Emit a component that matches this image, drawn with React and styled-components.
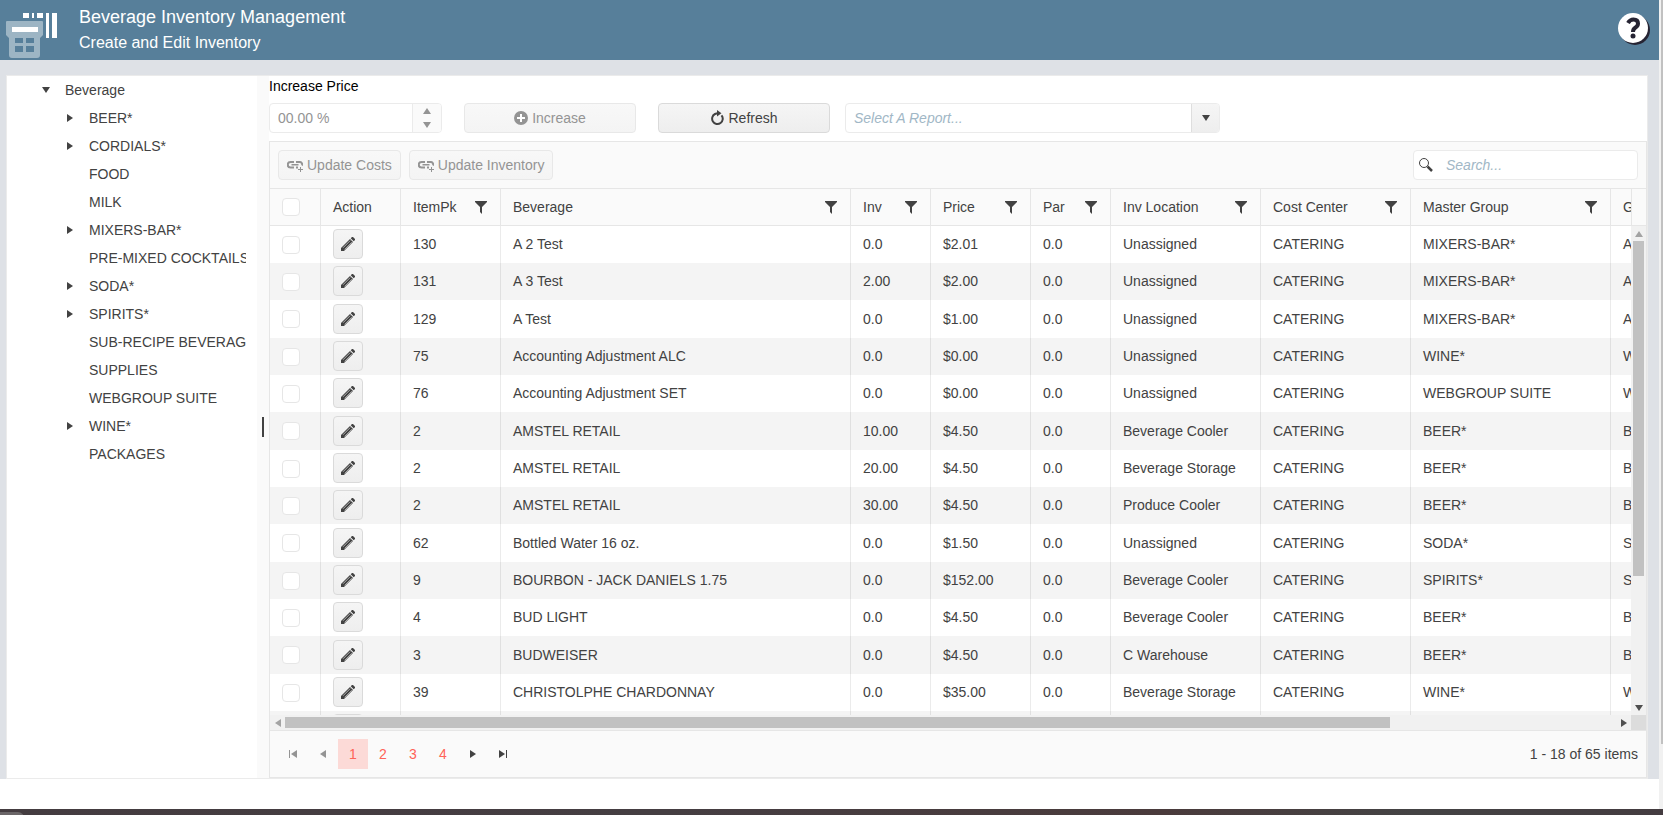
import React from 'react';
import styled, { createGlobalStyle, css } from 'styled-components';

const GlobalStyle = createGlobalStyle`
  *, *::before, *::after { box-sizing: border-box; }
  body {
    margin: 0;
    background: #fff;
    color: #424242;
    font: 14px/20px 'Liberation Sans', Arial, sans-serif;
  }
  button, input, select { font: inherit; color: inherit; margin: 0; }
`;

const Screen = styled.div`
  height: 100vh;
  min-height: 480px;
  display: flex;
  flex-direction: column;
  overflow: hidden;
`;

const Viewport = styled.div`
  flex: 1;
  min-height: 0;
  display: flex;
`;

const Page = styled.div`
  flex: 1;
  min-width: 0;
  display: flex;
  flex-direction: column;
  padding-bottom: 30px;
`;

const PageScroll = styled.div`
  width: 4px;
  background: #f1f1f1;
  padding-left: 2px;

  &::before {
    content: '';
    display: block;
    height: 746px;
    max-height: 92%;
    background: #c1c1c1;
  }
`;

const Desktop = styled.div`
  height: 6px;
  overflow: hidden;
  padding-top: 3px;
  background: linear-gradient(90deg, #443c40, #453e42 40%, #4a3b3c 70%, #444344 85%, #443c40);

  &::before {
    content: '';
    display: block;
    width: 24px;
    height: 6px;
    border-top-right-radius: 6px;
    background: #6b6668;
  }
`;

const Header = styled.header`
  flex: none;
  height: 60px;
  display: flex;
  align-items: center;
  padding: 0 9px 0 5px;
  background: #577f9a;
  color: #fff;
`;

const Titles = styled.div`
  flex: 1;
  padding: 4px 0 0 18px;
  height: 60px;

  h1, h2 {
    margin: 0;
    font-weight: 400;
    line-height: 26px;
  }
  h1 { font-size: 18px; }
  h2 { font-size: 16px; }
`;

const HelpButton = styled.button`
  display: flex;
  padding: 0;
  border: 0;
  background: none;
  cursor: pointer;
`;

const Workspace = styled.main`
  flex: 1;
  min-height: 0;
  display: flex;
  padding: 15px 11px 0 6px;
  background: #dee1e6;
`;

const Splitter = styled.div`
  flex: 1;
  min-width: 0;
  display: flex;
  border: 1px solid #ebebeb;
  background: #fff;
`;

const TreePane = styled.nav`
  flex: none;
  width: 250px;
  padding-right: 11px;
`;

const TreeList = styled.ul`
  list-style: none;
  margin: 0;
  padding: 0 0 0 24px;
  overflow: hidden;
`;

const TreeRow = styled.div`
  display: flex;
  align-items: center;
  height: 28px;
  padding-left: 8px;
  white-space: nowrap;
`;

const TreeToggle = styled.span`
  flex: none;
  width: 26px;
  padding: 0 15px 0 3px;
  display: flex;
  justify-content: center;
`;

const SplitBar = styled.div`
  flex: none;
  width: 12px;
  display: flex;
  align-items: center;
  justify-content: center;
  background: #fafafa;

  &::before {
    content: '';
    width: 2px;
    height: 20px;
    background: #424242;
  }
`;

const Content = styled.section`
  flex: 1;
  min-width: 0;
  display: flex;
  flex-direction: column;
`;

const PriceLabel = styled.label`
  color: #000;
  height: 27px;
`;

const Controls = styled.div`
  display: flex;
  gap: 15px;
  margin-bottom: 8px;
`;

const PriceGroup = styled.div`
  display: flex;
  gap: 22px;
`;

const Button = styled.button`
  display: inline-flex;
  align-items: center;
  justify-content: center;
  gap: 4px;
  height: 30px;
  width: ${(p) => (p.$wide ? '172px' : 'auto')};
  padding: 0 8px;
  border: 1px solid #dadada;
  border-radius: 4px;
  background: linear-gradient(#f5f5f5, #eeeeee);
  color: #424242;
  cursor: pointer;

  &:disabled {
    border-color: #e8e8e8;
    background: linear-gradient(#f8f8f8, #f4f4f4);
    color: #949494;
    cursor: default;
  }
`;

const Field = styled.div`
  display: flex;
  height: 30px;
  width: ${(p) => p.$width}px;
  border: 1px solid #ebebeb;
  border-radius: 4px;
  background: #fff;
  overflow: hidden;
`;

const fieldText = css`
  flex: 1;
  min-width: 0;
  border: 0;
  padding: 0 8px;
  outline: 0;
  background: transparent;
`;

const FieldInput = styled.input`
  ${fieldText}
  &:disabled { color: #949494; }
  &::placeholder { color: #a1b7c6; font-style: italic; opacity: 1; }
`;

const FieldSelect = styled.select`
  ${fieldText}
  appearance: none;
  color: #a1b7c6;
  font-style: italic;
`;

const Spinner = styled.div`
  width: 29px;
  display: flex;
  flex-direction: column;
  border-left: 1px solid #ebebeb;
  background: #fafafa;
`;

const SpinButton = styled.button`
  flex: 1;
  display: flex;
  align-items: center;
  justify-content: center;
  padding: 0;
  border: 0;
  background: none;
  color: #949494;
`;

const SelectArrow = styled.span`
  flex: none;
  width: 28px;
  display: flex;
  align-items: center;
  justify-content: center;
  border-left: 1px solid #dedede;
  background: linear-gradient(#f5f5f5, #eeeeee);
`;

const Grid = styled.div`
  flex: 1;
  min-height: 0;
  display: flex;
  flex-direction: column;
  border: 1px solid #e6e6e6;
  background: #fafafa;
`;

const GridToolbar = styled.div`
  flex: none;
  display: flex;
  gap: 8px;
  padding: 8px;
  border-bottom: 1px solid #e6e6e6;
`;

const SearchField = styled(Field)`
  margin-left: auto;
  align-items: center;
  padding-left: 4px;

  input { padding-left: 12px; }
`;

const HeadArea = styled.div`
  flex: none;
  padding-right: 15px;
  border-bottom: 1px solid #e6e6e6;
`;

const HeadClip = styled.div`
  overflow: hidden;
  border-right: 1px solid #e6e6e6;
  margin-right: -1px;
`;

const Body = styled.div`
  flex: 1;
  min-height: 0;
  display: grid;
  grid-template-columns: minmax(0, 1fr) 15px;
  grid-template-rows: minmax(0, 1fr) 15px;
`;

const BodyClip = styled.div`
  overflow: hidden;
  background: #fff;
`;

const Table = styled.table`
  table-layout: fixed;
  width: 1640px;
  border-collapse: separate;
  border-spacing: 0;

  th, td {
    padding: 0 13px 0 12px;
    text-align: left;
    font-weight: 400;
    white-space: nowrap;
    overflow: hidden;
    border-left: 1px solid rgba(0, 0, 0, 0.08);
  }
  td { padding-bottom: 1px; }
  th:first-child, td:first-child {
    border-left: 0;
    padding-bottom: 0;
  }
  th { height: 36px; }
`;

const Row = styled.tr`
  height: 37px;
  &:nth-child(even) { background: #f4f4f4; }
  &:nth-child(3n) { height: 38px; }
`;

const HeadCell = styled.div`
  display: flex;
  align-items: center;
  justify-content: space-between;
`;

const FilterButton = styled.button`
  display: flex;
  padding: 0;
  border: 0;
  background: none;
`;

const Checkbox = styled.input`
  appearance: none;
  display: block;
  width: 18px;
  height: 18px;
  border: 1px solid #e6e6e6;
  border-radius: 4px;
  background: #fff;
`;

const EditButton = styled(Button)`
  display: flex;
  width: 30px;
  padding: 0;
`;

const ScrollTrack = styled.div`
  display: flex;
  flex-direction: ${(p) => (p.$vertical ? 'column' : 'row')};
  align-items: center;
  background: #f1f1f1;
`;

const ScrollArrow = styled.span`
  flex: none;
  width: 15px;
  height: 15px;
  display: flex;
  align-items: center;
  justify-content: center;
  color: ${(p) => (p.$off ? '#a3a3a3' : '#505050')};
`;

const ScrollRail = styled.div`
  flex: 1;
  min-height: 0;
  min-width: 0;

  &::before {
    content: '';
    display: block;
    background: #c1c1c1;
    width: ${(p) => (p.$vertical ? '11px' : '83%')};
    height: ${(p) => (p.$vertical ? '73%' : '11px')};
  }
`;

const ScrollCorner = styled.div`
  background: #dcdcdc;
`;

const Pager = styled.nav`
  flex: none;
  display: flex;
  align-items: center;
  padding: 8px;
  border-top: 1px solid #e6e6e6;
`;

const PageButton = styled.button`
  width: 30px;
  height: 30px;
  display: flex;
  align-items: center;
  justify-content: center;
  padding: 0;
  border: 0;
  background: ${(p) => (p.$current ? '#fcdad7' : 'none')};
  color: ${(p) => (p.$number ? '#ff6358' : '#424242')};

  &:disabled { color: #949494; }
`;

const PagerInfo = styled.span`
  margin-left: auto;
`;

const arrowPaths = {
  right: 'M0 0L6 4L0 8Z',
  left: 'M6 0L0 4L6 8Z',
  down: 'M0 0H8L4 6Z',
  up: 'M0 6H8L4 0Z',
};

const Arrow = ({ dir, size = 8 }) => {
  const flat = dir === 'up' || dir === 'down';
  const small = (size * 3) / 4;
  return (
    <svg
      width={flat ? size : small}
      height={flat ? small : size}
      viewBox={flat ? '0 0 8 6' : '0 0 6 8'}
      fill="currentColor"
      aria-hidden="true"
    >
      <path d={arrowPaths[dir]} />
    </svg>
  );
};

const LogoIcon = () => (
  <svg width="56" height="60" viewBox="0 0 56 60" aria-hidden="true">
    <path fill="#fff" d="M18 13h6v5h-6zM27 13h2v5h-2zM32 13h6v5h-6zM41 13h3v25h-3zM47 13h5v25h-5z" />
    <path
      fill="#9db5c4"
      fillRule="evenodd"
      d="M2 21H37Q38 21 38 22V35L35 38V55Q35 58 32 58H7Q4 58 4 55V38L1 35V22Q1 21 2 21ZM10 38V43H18V38ZM21 38V43H29V38ZM10 46V52H18V46ZM21 46V52H29V46Z"
    />
    <path fill="#fff" d="M7 27h26v5H7z" />
  </svg>
);

const HelpIcon = () => (
  <svg width="34" height="34" viewBox="0 0 34 34" aria-hidden="true">
    <circle cx="19" cy="17" r="15" fill="#262433" />
    <circle cx="17" cy="15" r="15" fill="#fff" />
    <path
      d="M12 10Q14 6.500 17.500 6.500Q22 6.500 22 10.500Q22 13 19.500 14.500Q17 16 17 19"
      fill="none"
      stroke="#262433"
      strokeWidth="4"
    />
    <circle cx="17" cy="23" r="2.500" fill="#262433" />
  </svg>
);

const PlusIcon = () => (
  <svg width="14" height="14" viewBox="0 0 14 14" aria-hidden="true">
    <circle cx="7" cy="7" r="7" fill="currentColor" />
    <path d="M7 3V11M3 7H11" stroke="#fff" strokeWidth="2" />
  </svg>
);

const RefreshIcon = () => (
  <svg width="14" height="16" viewBox="0 0 14 16" aria-hidden="true">
    <path d="M11.500 5.300A5.300 5.300 0 1 1 5 4Q6.500 3.200 8 3.200" fill="none" stroke="currentColor" strokeWidth="2" />
    <path d="M7 0L11.500 3.200L7 6.400Z" fill="currentColor" />
  </svg>
);

const LinkPlusIcon = () => (
  <svg width="16" height="16" viewBox="0 0 16 16" aria-hidden="true">
    <g fill="none" stroke="currentColor">
      <path d="M7 5H3.500A2.500 2.500 0 0 0 3.500 10.500H7M9 5H12.500A2.500 2.500 0 0 1 15 8.500" strokeWidth="2" />
      <path d="M4.500 7.750H11.500" strokeWidth="1.500" />
      <path d="M9 10.500H11" strokeWidth="2" />
      <path d="M13.500 10V15M11 12.500H16" />
    </g>
  </svg>
);

const SearchIcon = () => (
  <svg width="16" height="16" viewBox="0 0 16 16" aria-hidden="true">
    <circle cx="6" cy="6" r="4.500" fill="none" stroke="#424242" />
    <path d="M9.500 9.500L14 14" stroke="#424242" strokeWidth="2.500" />
  </svg>
);

const FilterIcon = () => (
  <svg width="12" height="14" viewBox="0 0 12 14" aria-hidden="true">
    <path d="M0 1H12V2L7 7V14L5 12V7L0 2Z" fill="#424242" />
  </svg>
);

const PencilIcon = () => (
  <svg width="16" height="16" viewBox="0 0 16 16" aria-hidden="true">
    <path d="M1 15V12L10 3L13 6L4 15Z" fill="#424242" />
    <path d="M10.700 2.300L12 1H13L15 3V4L13.700 5.300Z" fill="#424242" />
    <path d="M3 11.800L10.200 4.600M4.600 13.400L11.800 6.200" stroke="#d4d4d4" strokeWidth=".7" />
  </svg>
);

const EndIcon = ({ first }) => (
  <svg width="8" height="8" viewBox="0 0 8 8" fill="currentColor" aria-hidden="true">
    <path d={first ? 'M0 0H1V8H0ZM8 0V8L2 4Z' : 'M7 0H8V8H7ZM0 0L6 4L0 8Z'} />
  </svg>
);

const groups = [
  ['BEER*', true],
  ['CORDIALS*', true],
  ['FOOD'],
  ['MILK'],
  ['MIXERS-BAR*', true],
  ['PRE-MIXED COCKTAILS'],
  ['SODA*', true],
  ['SPIRITS*', true],
  ['SUB-RECIPE BEVERAGE'],
  ['SUPPLIES'],
  ['WEBGROUP SUITE'],
  ['WINE*', true],
  ['PACKAGES'],
];

const columns = [
  { title: 'Action', width: 80, plain: true },
  { title: 'ItemPk', width: 100 },
  { title: 'Beverage', width: 350 },
  { title: 'Inv', width: 80 },
  { title: 'Price', width: 100 },
  { title: 'Par', width: 80 },
  { title: 'Inv Location', width: 150 },
  { title: 'Cost Center', width: 150 },
  { title: 'Master Group', width: 200 },
  { title: 'Group', width: 300 },
];

const items = [
  ['130', 'A 2 Test', '0.0', '$2.01', '0.0', 'Unassigned', 'CATERING', 'MIXERS-BAR*', 'A'],
  ['131', 'A 3 Test', '2.00', '$2.00', '0.0', 'Unassigned', 'CATERING', 'MIXERS-BAR*', 'A'],
  ['129', 'A Test', '0.0', '$1.00', '0.0', 'Unassigned', 'CATERING', 'MIXERS-BAR*', 'A'],
  ['75', 'Accounting Adjustment ALC', '0.0', '$0.00', '0.0', 'Unassigned', 'CATERING', 'WINE*', 'W'],
  ['76', 'Accounting Adjustment SET', '0.0', '$0.00', '0.0', 'Unassigned', 'CATERING', 'WEBGROUP SUITE', 'W'],
  ['2', 'AMSTEL RETAIL', '10.00', '$4.50', '0.0', 'Beverage Cooler', 'CATERING', 'BEER*', 'B'],
  ['2', 'AMSTEL RETAIL', '20.00', '$4.50', '0.0', 'Beverage Storage', 'CATERING', 'BEER*', 'B'],
  ['2', 'AMSTEL RETAIL', '30.00', '$4.50', '0.0', 'Produce Cooler', 'CATERING', 'BEER*', 'B'],
  ['62', 'Bottled Water 16 oz.', '0.0', '$1.50', '0.0', 'Unassigned', 'CATERING', 'SODA*', 'S'],
  ['9', 'BOURBON - JACK DANIELS 1.75', '0.0', '$152.00', '0.0', 'Beverage Cooler', 'CATERING', 'SPIRITS*', 'S'],
  ['4', 'BUD LIGHT', '0.0', '$4.50', '0.0', 'Beverage Cooler', 'CATERING', 'BEER*', 'B'],
  ['3', 'BUDWEISER', '0.0', '$4.50', '0.0', 'C Warehouse', 'CATERING', 'BEER*', 'B'],
  ['39', 'CHRISTOLPHE CHARDONNAY', '0.0', '$35.00', '0.0', 'Beverage Storage', 'CATERING', 'WINE*', 'W'],
  ['', '', '', '', '', '', '', '', ''],
];

const Columns = () => (
  <colgroup>
    <col width="50" />
    {columns.map((col) => (
      <col key={col.title} width={col.width} />
    ))}
  </colgroup>
);

const Tree = () => (
  <TreePane aria-label="Beverage groups">
    <TreeList>
      <li>
        <TreeRow>
          <TreeToggle><Arrow dir="down" /></TreeToggle>
          Beverage
        </TreeRow>
        <TreeList>
          {groups.map(([name, nested]) => (
            <li key={name}>
              <TreeRow>
                <TreeToggle>{nested && <Arrow dir="right" />}</TreeToggle>
                {name}
              </TreeRow>
            </li>
          ))}
        </TreeList>
      </li>
    </TreeList>
  </TreePane>
);

const InventoryGrid = () => (
  <Grid>
    <GridToolbar>
      <Button disabled><LinkPlusIcon />Update Costs</Button>
      <Button disabled><LinkPlusIcon />Update Inventory</Button>
      <SearchField $width={225}>
        <SearchIcon />
        <FieldInput type="text" placeholder="Search..." aria-label="Search" />
      </SearchField>
    </GridToolbar>
    <HeadArea>
      <HeadClip>
        <Table>
          <Columns />
          <thead>
            <tr>
              <th><Checkbox type="checkbox" aria-label="Select all" /></th>
              {columns.map((col) => (
                <th key={col.title}>
                  <HeadCell>
                    {col.title}
                    {!col.plain && (
                      <FilterButton aria-label={`Filter ${col.title}`}><FilterIcon /></FilterButton>
                    )}
                  </HeadCell>
                </th>
              ))}
            </tr>
          </thead>
        </Table>
      </HeadClip>
    </HeadArea>
    <Body>
      <BodyClip>
        <Table>
          <Columns />
          <tbody>
            {items.map((item, i) => (
              <Row key={i}>
                <td><Checkbox type="checkbox" aria-label={`Select ${item[1]}`} /></td>
                <td><EditButton aria-label={`Edit ${item[1]}`}><PencilIcon /></EditButton></td>
                {item.map((value, n) => (
                  <td key={n}>{value}</td>
                ))}
              </Row>
            ))}
          </tbody>
        </Table>
      </BodyClip>
      <ScrollTrack $vertical>
        <ScrollArrow $off><Arrow dir="up" /></ScrollArrow>
        <ScrollRail $vertical />
        <ScrollArrow><Arrow dir="down" /></ScrollArrow>
      </ScrollTrack>
      <ScrollTrack>
        <ScrollArrow $off><Arrow dir="left" /></ScrollArrow>
        <ScrollRail />
        <ScrollArrow><Arrow dir="right" /></ScrollArrow>
      </ScrollTrack>
      <ScrollCorner />
    </Body>
    <Pager aria-label="Pages">
      <PageButton disabled aria-label="First page"><EndIcon first /></PageButton>
      <PageButton disabled aria-label="Previous page"><Arrow dir="left" /></PageButton>
      {[1, 2, 3, 4].map((n) => (
        <PageButton key={n} $number $current={n === 1}>{n}</PageButton>
      ))}
      <PageButton aria-label="Next page"><Arrow dir="right" /></PageButton>
      <PageButton aria-label="Last page"><EndIcon /></PageButton>
      <PagerInfo>1 - 18 of 65 items</PagerInfo>
    </Pager>
  </Grid>
);

const App = () => (
  <>
    <GlobalStyle />
    <Screen>
      <Viewport>
        <Page>
          <Header>
            <LogoIcon />
            <Titles>
              <h1>Beverage Inventory Management</h1>
              <h2>Create and Edit Inventory</h2>
            </Titles>
            <HelpButton aria-label="Help"><HelpIcon /></HelpButton>
          </Header>
          <Workspace>
            <Splitter>
              <Tree />
              <SplitBar />
              <Content>
                <PriceLabel htmlFor="price">Increase Price</PriceLabel>
                <Controls>
                  <PriceGroup>
                    <Field $width={173}>
                      <FieldInput id="price" type="text" defaultValue="00.00 %" disabled />
                      <Spinner>
                        <SpinButton disabled aria-label="Increase value"><Arrow dir="up" /></SpinButton>
                        <SpinButton disabled aria-label="Decrease value"><Arrow dir="down" /></SpinButton>
                      </Spinner>
                    </Field>
                    <Button $wide disabled><PlusIcon />Increase</Button>
                    <Button $wide><RefreshIcon />Refresh</Button>
                  </PriceGroup>
                  <Field $width={375}>
                    <FieldSelect aria-label="Report">
                      <option>Select A Report...</option>
                    </FieldSelect>
                    <SelectArrow><Arrow dir="down" /></SelectArrow>
                  </Field>
                </Controls>
                <InventoryGrid />
              </Content>
            </Splitter>
          </Workspace>
        </Page>
        <PageScroll />
      </Viewport>
      <Desktop />
    </Screen>
  </>
);

export default App;
